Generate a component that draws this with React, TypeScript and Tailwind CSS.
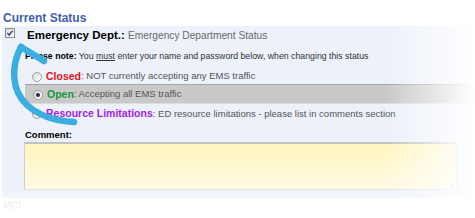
import React from "react";

function Radio({ checked = false }: { checked?: boolean }) {
  return (
    <span className="flex items-center justify-center w-[10px] h-[10px] shrink-0 rounded-full border border-[#a0a0a0] bg-linear-to-br from-[#d9d9d9] to-white">
      {checked && <span className="w-[4px] h-[4px] rounded-full bg-[#1d2c4c]" />}
    </span>
  );
}

export default function App() {
  return (
    <div className="relative w-[475px] h-[218px] overflow-hidden bg-white font-['Liberation_Sans',Arial,sans-serif]">
      <div className="h-[4px]" />

      <div className="mt-[7px] ml-[3px] text-[12px] leading-[14px] font-bold text-[#3f5eae]">Current Status</div>

      <div className="mt-[1px] ml-[2px] bg-[#ecf1fa] pt-[2px] pb-[8px]">
        <div className="flex items-start h-[14px]">
          <span className="ml-[3px] flex items-center justify-center w-[10px] h-[10px] shrink-0 border border-[#8c8c8c] bg-linear-to-br from-[#d6d6d6] to-white">
            <svg width="8" height="8" viewBox="0 0 8 8">
              <path d="M1.3 4.1 L3.1 6 L6.7 1.6" stroke="#3b4f8e" strokeWidth="1.5" fill="none" />
            </svg>
          </span>
          <span className="ml-[12px] text-[11.5px] leading-[14px] whitespace-nowrap">
            <span className="font-bold text-black">Emergency Dept.:</span>{" "}
            <span className="text-[10.2px] text-[#6a6a6a]">Emergency Department Status</span>
          </span>
        </div>

        <div className="mt-[8px] ml-[23px] text-[8.75px] leading-[12px] text-[#333] whitespace-nowrap">
          <span className="font-bold text-black">Please note:</span> You <span className="underline">must</span> enter your name and password below, when changing this status
        </div>

        <div className="mt-[7px] flex items-center h-[15px] whitespace-nowrap">
          <span className="ml-[30px]"><Radio /></span>
          <span className="ml-[4px] text-[10.5px] font-bold text-[#e3121b]">Closed</span>
          <span className="text-[9.5px] text-[#555]">: NOT currently accepting any EMS traffic</span>
        </div>

        <div className="ml-[23px] h-[20px] flex items-center border-t border-t-[#a6a6a6] border-b border-b-[#dcdcdc] bg-[#c9c9c9] pt-[1px] whitespace-nowrap">
          <span className="ml-[8px]"><Radio checked /></span>
          <span className="ml-[4px] text-[10.5px] font-bold text-[#17983a]">Open</span>
          <span className="text-[9.5px] text-[#555]">: Accepting all EMS traffic</span>
        </div>

        <div className="mt-[1px] flex items-center h-[18px] whitespace-nowrap">
          <span className="ml-[30px]"><Radio /></span>
          <span className="ml-[4px] text-[10.5px] font-bold text-[#a01fe4]">Resource Limitations</span>
          <span className="text-[9.5px] text-[#555]">: ED resource limitations - please list in comments section</span>
        </div>

        <div className="mt-[6px] ml-[23px] text-[9.5px] leading-[12px] font-bold text-black">Comment:</div>

        <div className="relative mt-[1px] ml-[22px] w-[433px] h-[48px] border border-[#dedede] border-t-2 border-t-[#c2c2c2] border-l-[#cfcfcf] bg-linear-to-b from-[#fff5bf] to-[#fffbe3]">
          <svg className="absolute right-[1px] bottom-[1px]" width="7" height="7" viewBox="0 0 7 7">
            <rect x="5" y="1" width="1.4" height="1.4" fill="#c8c8c8" />
            <rect x="3" y="3" width="1.4" height="1.4" fill="#c8c8c8" />
            <rect x="5" y="3" width="1.4" height="1.4" fill="#c8c8c8" />
            <rect x="1" y="5" width="1.4" height="1.4" fill="#c8c8c8" />
            <rect x="3" y="5" width="1.4" height="1.4" fill="#c8c8c8" />
            <rect x="5" y="5" width="1.4" height="1.4" fill="#c8c8c8" />
          </svg>
        </div>
      </div>

      <div className="mt-[2px] ml-[3px] text-[10px] leading-[12px] font-bold text-[#e2e7f0]">MCI</div>

      <div className="pointer-events-none absolute right-0 top-0 h-full w-[90px] bg-linear-to-r from-white/0 to-white" />
      <div className="pointer-events-none absolute left-0 bottom-0 w-full h-[32px] bg-linear-to-b from-white/0 to-white/90" />

      <svg className="pointer-events-none absolute left-0 top-0" width="475" height="218" viewBox="0 0 475 218">
        <path d="M21 47 C11 66, 11 90, 27 105 C39 116, 55 121, 74 122" stroke="#3aaee0" strokeWidth="6.5" strokeLinecap="round" fill="none" />
        <path d="M21 47 L44 61" stroke="#3aaee0" strokeWidth="6.5" strokeLinecap="round" fill="none" />
      </svg>
    </div>
  );
}
